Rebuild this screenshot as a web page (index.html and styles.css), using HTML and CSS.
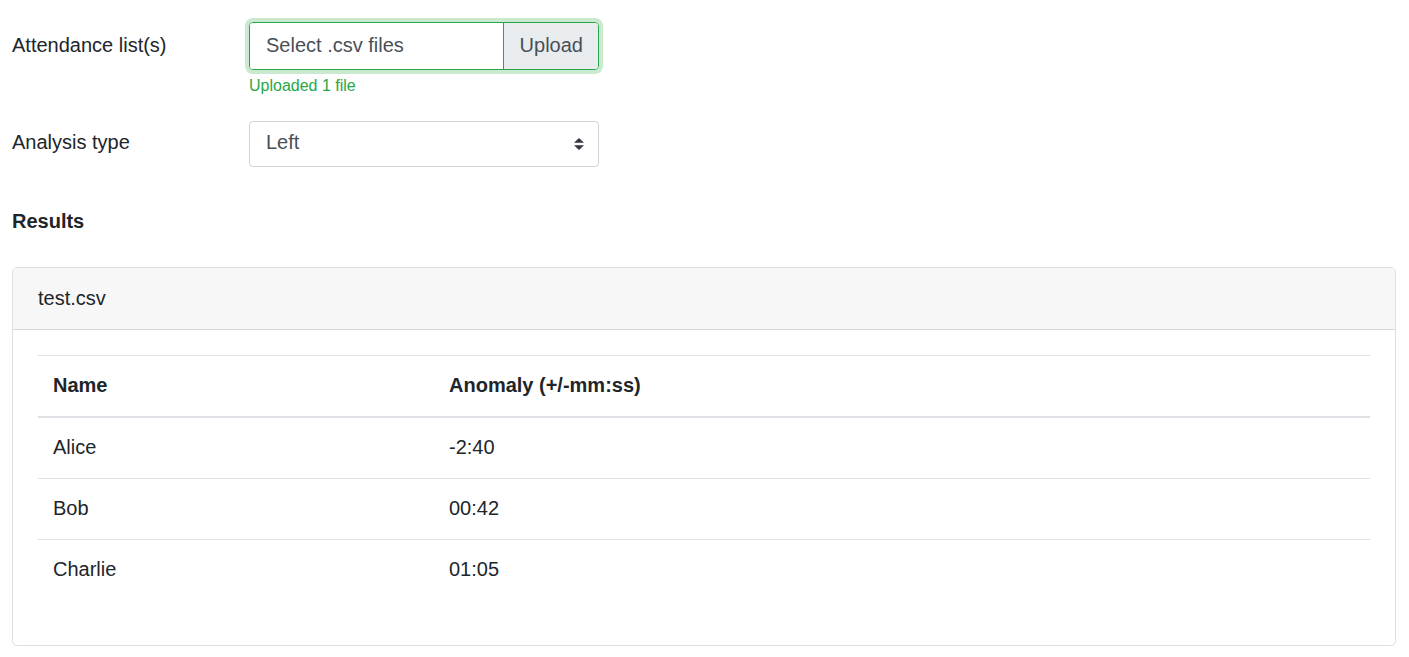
FILE: index.html
```html
<!DOCTYPE html>
<html lang="en">
<head>
<meta charset="utf-8">
<title>Attendance</title>
<link rel="stylesheet" href="styles.css">
</head>
<body>
<div class="page">
  <div class="form-row row-upload">
    <label class="form-label">Attendance list(s)</label>
    <div class="form-field">
      <div class="file-group">
        <span class="file-label">Select .csv files</span>
        <span class="file-button">Upload</span>
      </div>
      <div class="valid-feedback">Uploaded 1 file</div>
    </div>
  </div>
  <div class="form-row row-select">
    <label class="form-label">Analysis type</label>
    <div class="form-field">
      <div class="select">
        <span class="select-value">Left</span>
        <svg class="select-arrow" width="10" height="12" viewBox="0 0 4 5" preserveAspectRatio="none"><path fill="#343a40" d="M2 0L0 2h4zm0 5L0 3h4z"/></svg>
      </div>
    </div>
  </div>
  <h5 class="results-title">Results</h5>
  <div class="card">
    <div class="card-header">test.csv</div>
    <div class="card-body">
      <table class="table">
        <thead>
          <tr><th class="col-name">Name</th><th>Anomaly (+/-mm:ss)</th></tr>
        </thead>
        <tbody>
          <tr><td>Alice</td><td>-2:40</td></tr>
          <tr><td>Bob</td><td>00:42</td></tr>
          <tr><td>Charlie</td><td>01:05</td></tr>
        </tbody>
      </table>
    </div>
  </div>
</div>
</body>
</html>
```

FILE: styles.css
```css
* { box-sizing: border-box; }
html, body { margin: 0; padding: 0; background: #fff; }
body {
  font-family: "Liberation Sans", Arial, sans-serif;
  font-size: 20px;
  line-height: 1.5;
  color: #212529;
}
.page { padding: 22px 13px 0 12px; }
.form-row { display: flex; align-items: flex-start; }
.row-upload { margin-bottom: 23px; }
.row-select { margin-bottom: 0; }
.form-label { width: 237px; flex: none; padding-top: 8px; line-height: 30px; }
.row-select .form-label { padding-top: 6px; }
.form-field { width: 350px; }
.file-group {
  display: flex;
  height: 48px;
  border: 1px solid #28a745;
  border-radius: 4px;
  box-shadow: 0 0 0 4px rgba(40,167,69,.25);
  color: #495057;
  overflow: hidden;
}
.file-label { flex: 1; padding: 7px 16px 9px; line-height: 30px; background: #fff; }
.file-button {
  padding: 7px 15px 9px 16px;
  line-height: 30px;
  background: #e9ecef;
  border-left: 1px solid #28a745;
}
.valid-feedback { margin-top: 4px; font-size: 16px; line-height: 24px; color: #28a745; }
.select {
  display: flex;
  align-items: center;
  justify-content: space-between;
  height: 46px;
  padding: 0 14px 0 16px;
  border: 1px solid #ced4da;
  border-radius: 4px;
  color: #495057;
  line-height: 30px;
}
.select-value { padding-bottom: 4px; }
.select-arrow { display: block; }
.results-title {
  margin: 39px 0 31px;
  font-size: 20px;
  font-weight: 700;
  line-height: 30px;
}
.card {
  border: 1px solid rgba(0,0,0,.125);
  border-radius: 5px;
  overflow: hidden;
}
.card-header {
  padding: 15px 25px 16px;
  line-height: 30px;
  background: #f7f7f7;
  border-bottom: 1px solid rgba(0,0,0,.125);
}
.card-body { padding: 25px 25px 25px; }
.table { width: 100%; border-collapse: collapse; margin-bottom: 20px; }
.table th, .table td {
  padding: 14px 15px 16px;
  line-height: 30px;
  text-align: left;
  border-top: 1px solid #dee2e6;
  vertical-align: top;
}
.table th { font-weight: 700; }
.table thead th { border-bottom: 2px solid #dee2e6; }
.col-name { width: 396px; }
```
